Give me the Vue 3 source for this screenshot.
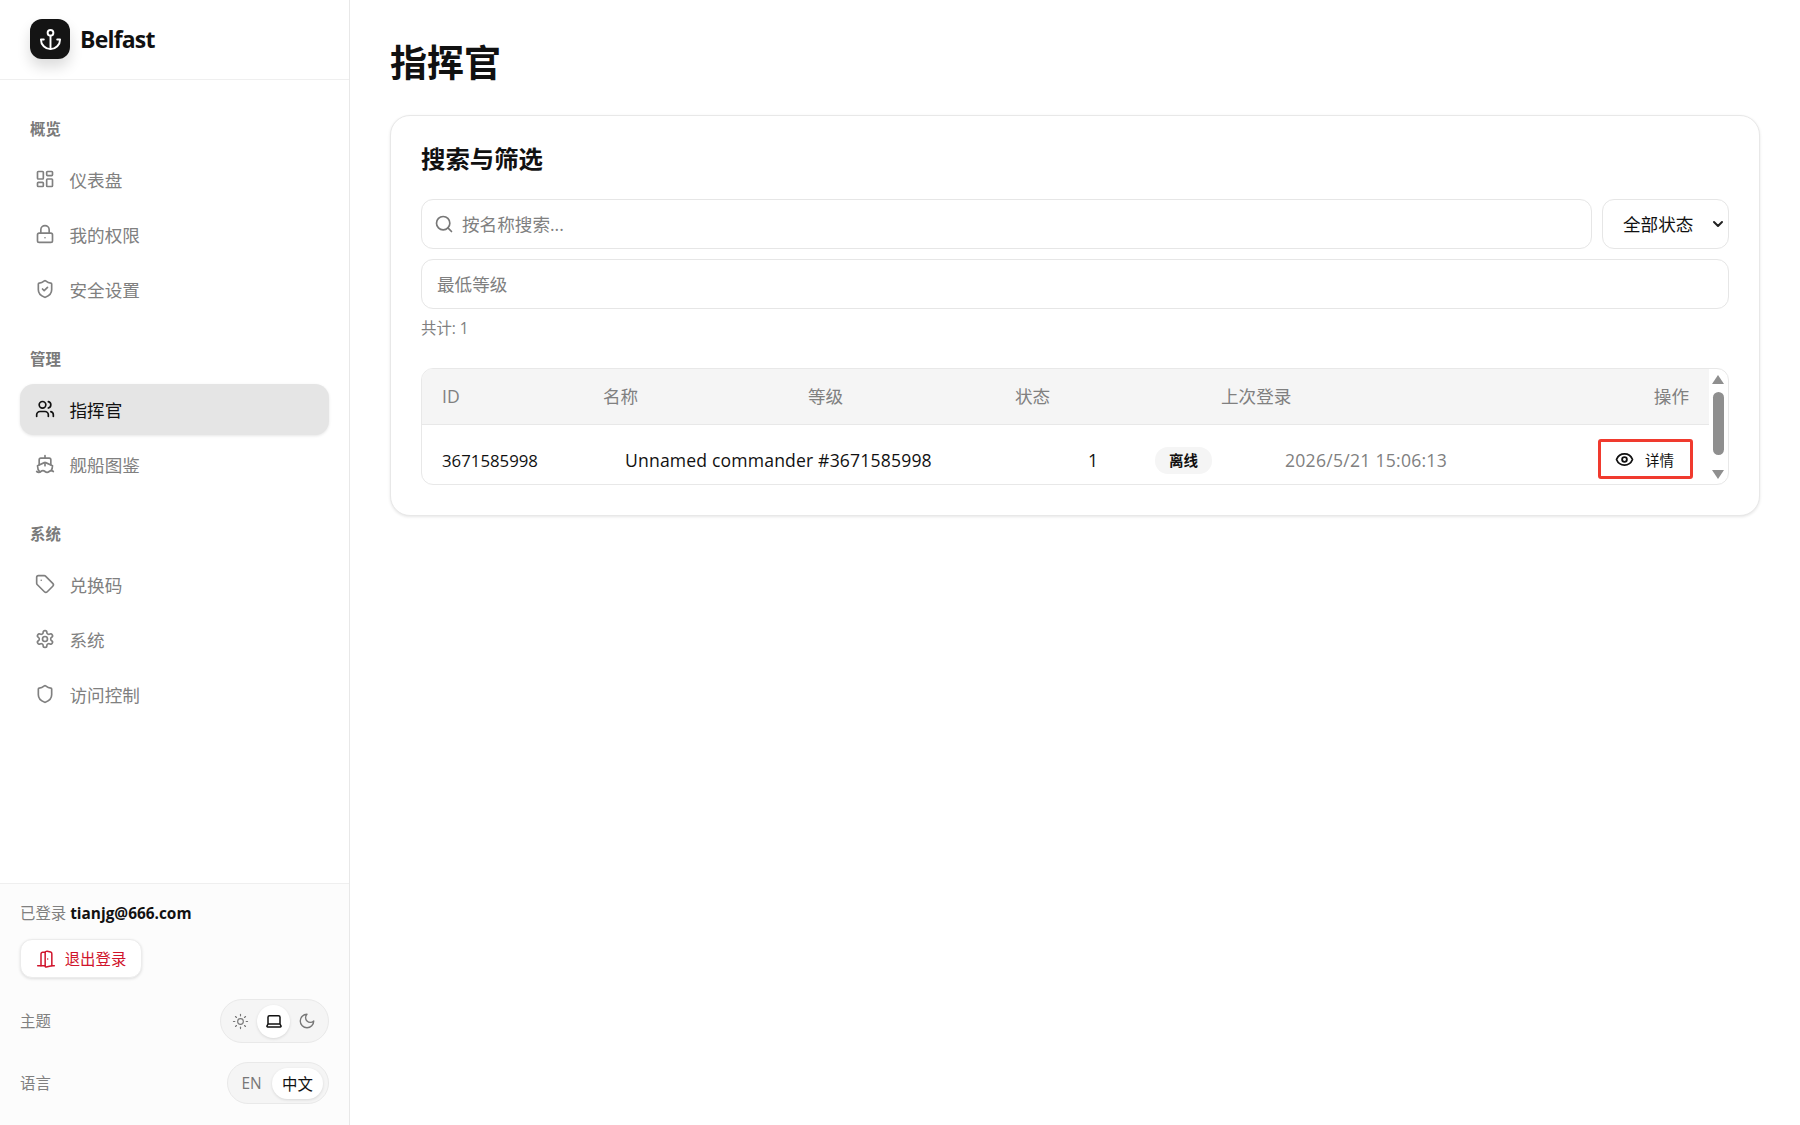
<script setup>
import { h } from 'vue'

// lucide style outlines, circles written as arcs
const icons = {
  anchor: ['M12 22V8', 'M5 12H2a10 10 0 0 0 20 0h-3', 'M12 2a3 3 0 1 0 0 6 3 3 0 0 0 0-6'],
  dashboard: ['M4 3h5a1 1 0 0 1 1 1v7a1 1 0 0 1-1 1H4a1 1 0 0 1-1-1V4a1 1 0 0 1 1-1z', 'M15 3h5a1 1 0 0 1 1 1v3a1 1 0 0 1-1 1h-5a1 1 0 0 1-1-1V4a1 1 0 0 1 1-1z', 'M15 12h5a1 1 0 0 1 1 1v7a1 1 0 0 1-1 1h-5a1 1 0 0 1-1-1v-7a1 1 0 0 1 1-1z', 'M4 16h5a1 1 0 0 1 1 1v3a1 1 0 0 1-1 1H4a1 1 0 0 1-1-1v-3a1 1 0 0 1 1-1z'],
  lock: ['M5 11h14a2 2 0 0 1 2 2v7a2 2 0 0 1-2 2H5a2 2 0 0 1-2-2v-7a2 2 0 0 1 2-2z', 'M7 11V7a5 5 0 0 1 10 0v4', 'M12 16.5h.01'],
  shieldCheck: ['M20 13c0 5-3.5 7.5-7.66 8.95a1 1 0 0 1-.67-.01C7.5 20.5 4 18 4 13V6a1 1 0 0 1 1-1c2 0 4.5-1.2 6.24-2.72a1.17 1.17 0 0 1 1.52 0C14.51 3.81 17 5 19 5a1 1 0 0 1 1 1z', 'm9 12 2 2 4-4'],
  users: ['M16 21v-2a4 4 0 0 0-4-4H6a4 4 0 0 0-4 4v2', 'M9 3a4 4 0 1 0 0 8 4 4 0 0 0 0-8', 'M22 21v-2a4 4 0 0 0-3-3.87', 'M16 3.13a4 4 0 0 1 0 7.75'],
  ship: ['M12 10.189V14', 'M12 2v3', 'M19 13V7a2 2 0 0 0-2-2H7a2 2 0 0 0-2 2v6', 'M19.38 20A11.6 11.6 0 0 0 21 14l-8.188-3.639a2 2 0 0 0-1.624 0L3 14a11.6 11.6 0 0 0 2.81 7.76', 'M2 21c.6.5 1.2 1 2.5 1 2.5 0 2.5-2 5-2 1.3 0 1.9.5 2.5 1s1.2 1 2.5 1c2.5 0 2.5-2 5-2 1.3 0 1.9.5 2.5 1'],
  tag: ['M12.586 2.586A2 2 0 0 0 11.172 2H4a2 2 0 0 0-2 2v7.172a2 2 0 0 0 .586 1.414l8.704 8.704a2.426 2.426 0 0 0 3.42 0l6.58-6.58a2.426 2.426 0 0 0 0-3.42z', 'M7.5 7.5h.01'],
  settings: ['M12.22 2h-.44a2 2 0 0 0-2 2v.18a2 2 0 0 1-1 1.73l-.43.25a2 2 0 0 1-2 0l-.15-.08a2 2 0 0 0-2.73.73l-.22.38a2 2 0 0 0 .73 2.73l.15.1a2 2 0 0 1 1 1.72v.51a2 2 0 0 1-1 1.74l-.15.09a2 2 0 0 0-.73 2.73l.22.38a2 2 0 0 0 2.73.73l.15-.08a2 2 0 0 1 2 0l.43.25a2 2 0 0 1 1 1.73V20a2 2 0 0 0 2 2h.44a2 2 0 0 0 2-2v-.18a2 2 0 0 1 1-1.73l.43-.25a2 2 0 0 1 2 0l.15.08a2 2 0 0 0 2.73-.73l.22-.39a2 2 0 0 0-.73-2.73l-.15-.08a2 2 0 0 1-1-1.74v-.5a2 2 0 0 1 1-1.74l.15-.09a2 2 0 0 0 .73-2.73l-.22-.38a2 2 0 0 0-2.73-.73l-.15.08a2 2 0 0 1-2 0l-.43-.25a2 2 0 0 1-1-1.73V4a2 2 0 0 0-2-2z', 'M12 9a3 3 0 1 0 0 6 3 3 0 0 0 0-6'],
  shield: ['M20 13c0 5-3.5 7.5-7.66 8.95a1 1 0 0 1-.67-.01C7.5 20.5 4 18 4 13V6a1 1 0 0 1 1-1c2 0 4.5-1.2 6.24-2.72a1.17 1.17 0 0 1 1.52 0C14.51 3.81 17 5 19 5a1 1 0 0 1 1 1z'],
  door: ['M11 20H2', 'M11 4.562v16.157a1 1 0 0 0 1.242.97L19 20V5.562a2 2 0 0 0-1.515-1.94l-4-1A2 2 0 0 0 11 4.561z', 'M11 4H8a2 2 0 0 0-2 2v14', 'M14 12h.01', 'M22 20h-3'],
  sun: ['M12 8a4 4 0 1 0 0 8 4 4 0 0 0 0-8', 'M12 2v2', 'M12 20v2', 'm4.93 4.93 1.41 1.41', 'm17.66 17.66 1.41 1.41', 'M2 12h2', 'M20 12h2', 'm6.34 17.66-1.41 1.41', 'm19.07 4.93-1.41 1.41'],
  laptop: ['M20 16V7a2 2 0 0 0-2-2H6a2 2 0 0 0-2 2v9m16 0H4m16 0 1.28 2.55a1 1 0 0 1-.9 1.45H3.62a1 1 0 0 1-.9-1.45L4 16'],
  moon: ['M12 3a6 6 0 0 0 9 9 9 9 0 1 1-9-9Z'],
  search: ['M11 3a8 8 0 1 0 0 16 8 8 0 0 0 0-16', 'm21 21-4.3-4.3'],
  eye: ['M2.062 12.348a1 1 0 0 1 0-.696 10.75 10.75 0 0 1 19.876 0 1 1 0 0 1 0 .696 10.75 10.75 0 0 1-19.876 0', 'M12 9a3 3 0 1 0 0 6 3 3 0 0 0 0-6'],
  chevron: ['m6 9 6 6 6-6']
}

const Icon = (props) => h('svg', {
  width: props.size || 20,
  height: props.size || 20,
  viewBox: '0 0 24 24',
  fill: 'none',
  stroke: 'currentColor',
  'stroke-width': props.stroke || 2,
  'stroke-linecap': 'round',
  'stroke-linejoin': 'round'
}, icons[props.name].map(d => h('path', { d })))
Icon.props = ['name', 'size', 'stroke']

const sections = [
  { title: '概览', items: [
    { label: '仪表盘', icon: 'dashboard' },
    { label: '我的权限', icon: 'lock' },
    { label: '安全设置', icon: 'shieldCheck' }
  ] },
  { title: '管理', items: [
    { label: '指挥官', icon: 'users', active: true },
    { label: '舰船图鉴', icon: 'ship' }
  ] },
  { title: '系统', items: [
    { label: '兑换码', icon: 'tag' },
    { label: '系统', icon: 'settings' },
    { label: '访问控制', icon: 'shield' }
  ] }
]

const columns = ['ID', '名称', '等级', '状态', '上次登录', '操作']
</script>

<template>
  <div class="layout">
    <aside class="sidebar">
      <div class="brand">
        <div class="logo"><Icon name="anchor" :size="23" /></div>
        <span class="brand-name">Belfast</span>
      </div>

      <nav class="nav">
        <section v-for="section in sections" :key="section.title" class="nav-section">
          <div class="nav-title">{{ section.title }}</div>
          <ul class="nav-list">
            <li v-for="item in section.items" :key="item.label" class="nav-item" :class="{ active: item.active }">
              <Icon :name="item.icon" />
              <span>{{ item.label }}</span>
            </li>
          </ul>
        </section>
      </nav>

      <div class="side-footer">
        <div class="login-line">已登录 <strong>tianjg@666.com</strong></div>
        <button class="logout"><Icon name="door" :size="20" :stroke="1.8" /><span>退出登录</span></button>
        <div class="pref-row theme-row">
          <span class="pref-label">主题</span>
          <div class="pill">
            <span class="pill-btn"><Icon name="sun" :size="17" :stroke="1.6" /></span>
            <span class="pill-btn on"><Icon name="laptop" :size="18" /></span>
            <span class="pill-btn"><Icon name="moon" :size="18" :stroke="1.8" /></span>
          </div>
        </div>
        <div class="pref-row lang-row">
          <span class="pref-label">语言</span>
          <div class="pill">
            <span class="pill-btn en">EN</span>
            <span class="pill-btn zh on">中文</span>
          </div>
        </div>
      </div>
    </aside>

    <main class="main">
      <h1 class="page-title">指挥官</h1>
      <div class="card">
        <h2 class="card-title">搜索与筛选</h2>
        <div class="filter-row">
          <div class="search">
            <span class="search-icon"><Icon name="search" :size="20" /></span>
            <input class="field search-input" type="text" placeholder="按名称搜索...">
          </div>
          <div class="select-wrap">
            <select class="field status-select">
              <option>全部状态</option>
            </select>
            <span class="select-arrow"><Icon name="chevron" :size="16" :stroke="3" /></span>
          </div>
        </div>
        <input class="field level-input" type="text" placeholder="最低等级">
        <div class="total">共计: 1</div>

        <div class="table">
          <div class="table-body">
            <div class="table-head">
              <span v-for="col in columns" :key="col">{{ col }}</span>
            </div>
            <div class="table-row">
              <span class="cell cell-id">3671585998</span>
              <span class="cell cell-name">Unnamed commander #3671585998</span>
              <span class="cell cell-level">1</span>
              <span class="cell"><span class="badge">离线</span></span>
              <span class="cell cell-date">2026/5/21 15:06:13</span>
              <button class="detail"><Icon name="eye" :size="19" :stroke="2.3" /><span>详情</span></button>
            </div>
          </div>
          <div class="scrollbar">
            <span class="arrow up"></span>
            <span class="thumb"></span>
            <span class="arrow down"></span>
          </div>
        </div>
      </div>
    </main>
  </div>
</template>

<style>
html, body {
  margin: 0;
  background: #fff;
}
</style>

<style scoped>
.layout {
  display: flex;
  min-height: 1125px;
  font-family: "Open Sans", "Noto Sans CJK SC", sans-serif;
  color: #111;
}

.sidebar {
  width: 350px;
  box-sizing: border-box;
  flex-shrink: 0;
  display: flex;
  flex-direction: column;
  border-right: 1.5px solid #e8e8e8;
}

.brand {
  height: 80px;
  box-sizing: border-box;
  padding: 0 30px 1px;
  display: flex;
  align-items: center;
  gap: 10px;
  border-bottom: 1px solid #efefef;
}

.logo {
  width: 40px;
  height: 40px;
  border-radius: 12px;
  background: #141414;
  color: #fff;
  display: flex;
  align-items: center;
  justify-content: center;
  box-shadow: 0 8px 14px rgba(0, 0, 0, 0.14);
}

.brand-name {
  font-size: 23px;
  font-weight: 700;
  letter-spacing: -0.8px;
}

.nav {
  padding: 38px 20px 0;
}

.nav-section {
  margin-bottom: 33.5px;
}

.nav-title {
  padding-left: 10px;
  font-size: 15.4px;
  line-height: 24px;
  font-weight: 700;
  color: #7a7a7a;
}

.nav-list {
  list-style: none;
  margin: 11.5px 0 0;
  padding: 0;
  display: flex;
  flex-direction: column;
  gap: 4px;
}

.nav-item {
  height: 51px;
  padding-left: 15px;
  display: flex;
  align-items: center;
  gap: 14.5px;
  border-radius: 14px;
  font-size: 17.6px;
  color: #808080;
}

.nav-item.active {
  background: #e5e5e5;
  color: #111;
  box-shadow: 0 1px 3px rgba(0, 0, 0, 0.1);
}

.side-footer {
  margin-top: auto;
  height: 242px;
  box-sizing: border-box;
  padding: 18px 20px 0;
  background: #fcfcfc;
  border-top: 1px solid #efefef;
  font-size: 15.4px;
  color: #808080;
}

.login-line {
  line-height: 24px;
}

.login-line strong {
  color: #111;
  font-weight: 700;
}

.logout {
  margin-top: 13px;
  height: 39px;
  width: 122px;
  display: flex;
  align-items: center;
  justify-content: center;
  gap: 9px;
  padding: 0;
  background: #fff;
  border: 1px solid #ececec;
  border-radius: 12px;
  box-shadow: 0 1px 3px rgba(0, 0, 0, 0.12);
  font: inherit;
  color: #d0142c;
}

.pref-row {
  display: flex;
  align-items: center;
  justify-content: space-between;
}

.pref-label {
  padding-bottom: 2px;
}

.theme-row {
  margin-top: 21px;
}

.lang-row {
  margin-top: 19px;
}

.pill {
  display: flex;
  align-items: center;
  box-sizing: border-box;
  padding: 0 5px 0 3px;
  background: #f5f5f5;
  border: 1px solid #e9e9e9;
  border-radius: 22px;
}

.theme-row .pill {
  height: 44px;
}

.lang-row .pill {
  height: 42px;
}

.pill-btn {
  height: 33px;
  width: 33px;
  display: flex;
  align-items: center;
  justify-content: center;
  border-radius: 17px;
  color: #777;
}

.pill-btn.on {
  background: #fff;
  color: #111;
  box-shadow: 0 1px 3px rgba(0, 0, 0, 0.12);
}

.pill-btn.en {
  width: 41px;
  height: 31px;
}

.pill-btn.zh {
  width: 51px;
  height: 31px;
}

.main {
  flex: 1;
  min-width: 0;
  padding: 41px 40px 0;
}

.page-title {
  margin: 0 0 30px;
  font-size: 37px;
  line-height: 44px;
  font-weight: 700;
}

.card {
  box-sizing: border-box;
  padding: 25px 30px 30px;
  background: #fff;
  border: 1px solid #e8e8e8;
  border-radius: 20px;
  box-shadow: 0 1px 3px rgba(0, 0, 0, 0.1);
}

.card-title {
  margin: 0 0 22px;
  font-size: 24.4px;
  line-height: 36px;
  font-weight: 700;
}

.filter-row {
  display: flex;
  gap: 10px;
  margin-bottom: 10px;
}

.field {
  display: block;
  box-sizing: border-box;
  width: 100%;
  height: 50px;
  background: #fff;
  border: 1px solid #e6e6e6;
  border-radius: 12px;
  outline: none;
  font-family: inherit;
  font-size: 17.6px;
  color: #111;
}

.field::placeholder {
  color: #808080;
  opacity: 1;
}

.search {
  flex: 1;
  position: relative;
}

.search-icon {
  position: absolute;
  left: 13px;
  top: 15px;
  display: flex;
  color: #777;
}

.search-input {
  padding: 0 15px 0 40px;
}

.select-wrap {
  width: 127px;
  position: relative;
}

.status-select {
  appearance: none;
  padding: 0 0 0 20px;
}

.select-arrow {
  position: absolute;
  right: 3px;
  top: 17px;
  display: flex;
  color: #222;
  pointer-events: none;
}

.level-input {
  padding: 0 15px;
}

.total {
  margin-top: 10px;
  font-size: 15.4px;
  line-height: 20px;
  color: #808080;
}

.table {
  margin-top: 29px;
  display: flex;
  border: 1px solid #e8e8e8;
  border-radius: 12px;
  overflow: hidden;
}

.table-body {
  flex: 1;
  min-width: 0;
}

.table-head {
  height: 55px;
  box-sizing: content-box;
  display: grid;
  grid-template-columns: 161px 205px 207px 206px 1fr auto;
  align-items: center;
  padding: 0 20px 0 20px;
  background: #f5f5f5;
  border-bottom: 1px solid #e8e8e8;
  font-size: 17.6px;
  line-height: 24px;
  color: #808080;
}

.table-head span {
  padding-bottom: 2px;
}

.table-row {
  height: 59px;
  box-sizing: border-box;
  display: grid;
  grid-template-columns: 183px 463px 67px 130px 1fr auto;
  align-items: center;
  padding: 14px 16px 5px 20px;
  font-size: 17.6px;
}

.cell {
  padding-top: 2px;
}

.cell-id {
  font-size: 16.8px;
}

.cell-name {
  letter-spacing: 0.16px;
}

.cell-date {
  color: #808080;
  letter-spacing: 0.25px;
}

.badge {
  display: inline-block;
  width: 57px;
  height: 27px;
  line-height: 27px;
  text-align: center;
  border-radius: 13px;
  background: #f5f5f5;
  font-size: 14.5px;
  font-weight: 700;
}

.detail {
  width: 95px;
  height: 40px;
  box-sizing: border-box;
  display: flex;
  align-items: center;
  justify-content: center;
  gap: 11px;
  padding: 0 2px 0 0;
  background: #fff;
  border: 3px solid #f03a2e;
  border-radius: 3px;
  font-family: inherit;
  font-size: 14.5px;
  color: #111;
}

.scrollbar {
  width: 19px;
  flex-shrink: 0;
  box-sizing: border-box;
  padding: 6px 1px 5px 0;
  display: flex;
  flex-direction: column;
  align-items: center;
}

.arrow {
  width: 0;
  height: 0;
  border-left: 6.5px solid transparent;
  border-right: 6.5px solid transparent;
}

.arrow.up {
  border-bottom: 9px solid #8f8f8f;
}

.arrow.down {
  margin-top: auto;
  border-top: 9px solid #8f8f8f;
}

.thumb {
  width: 11px;
  height: 63px;
  margin-top: 8px;
  border-radius: 6px;
  background: #8f8f8f;
}
</style>
